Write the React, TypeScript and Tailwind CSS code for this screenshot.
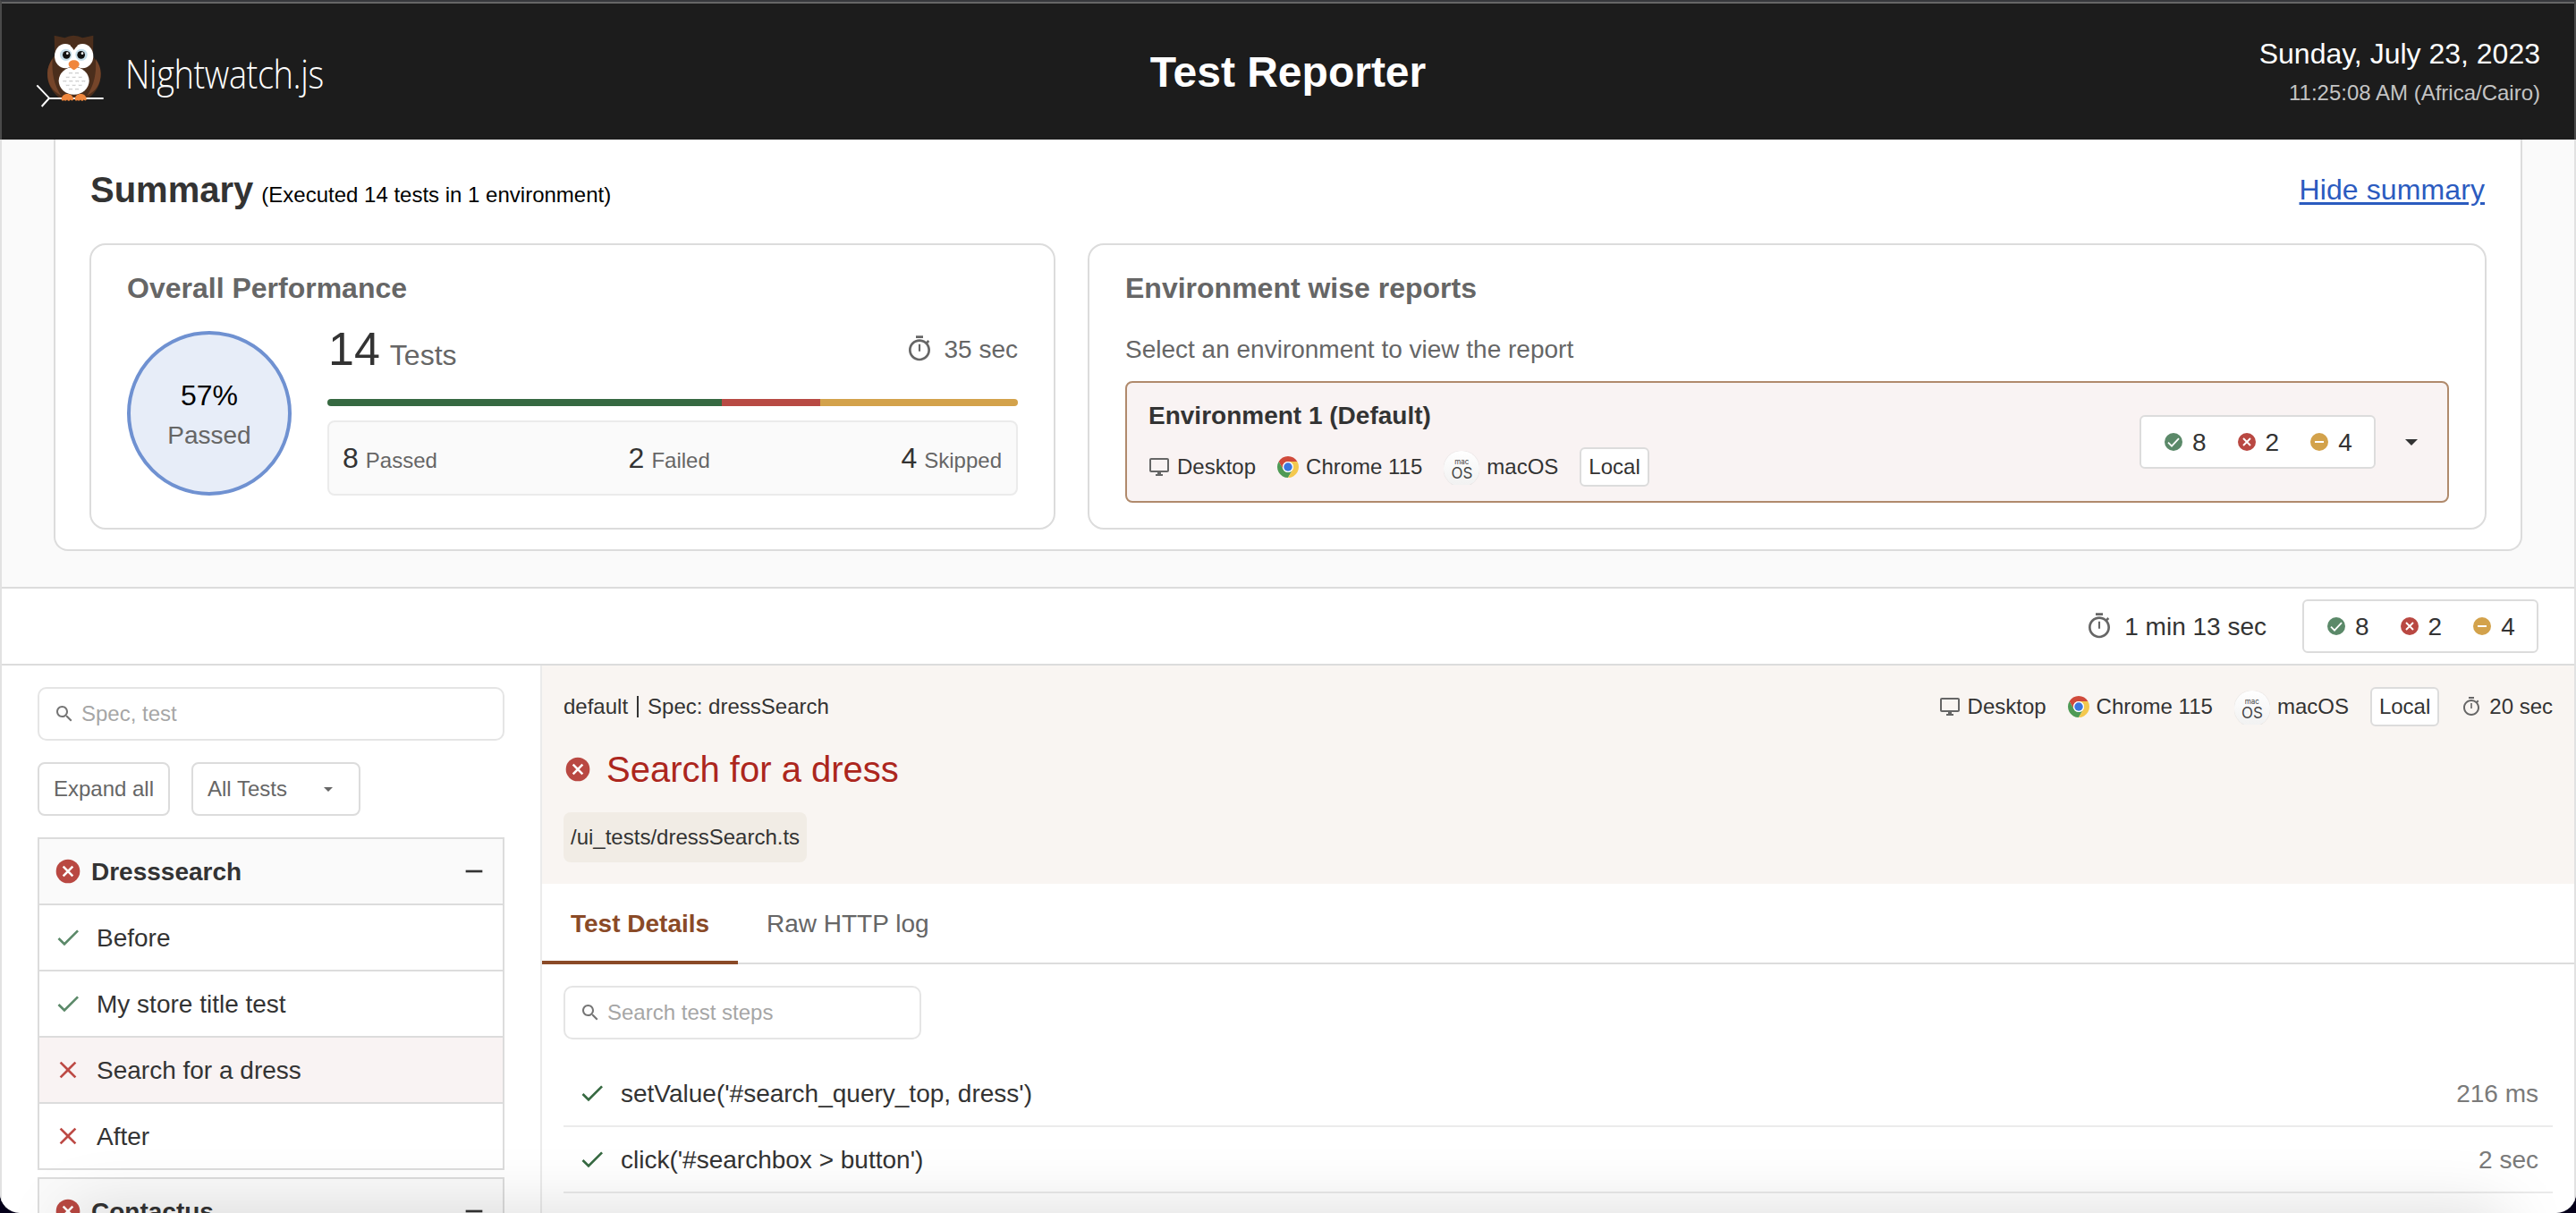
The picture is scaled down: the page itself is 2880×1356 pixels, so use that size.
import React from "react";

type IconProps = { className?: string };

const Glyph = ({ d, className }: { d: string; className?: string }) => (
  <svg viewBox="0 0 24 24" fill="currentColor" className={"shrink-0 " + (className ?? "")}>
    <path d={d} />
  </svg>
);

const Timer = ({ className }: IconProps) => (
  <Glyph
    className={className}
    d="M15 1H9v2h6V1zm-3.8 13h1.6V8h-1.6v6zm7.83-6.61l1.42-1.42c-.43-.51-.9-.99-1.41-1.41l-1.42 1.42C16.07 4.74 14.12 4 12 4c-4.97 0-9 4.03-9 9s4.02 9 9 9 9-4.03 9-9c0-2.12-.74-4.07-1.97-5.61zM12 20c-3.87 0-7-3.13-7-7s3.13-7 7-7 7 3.13 7 7-3.13 7-7 7z"
  />
);

const Search = ({ className }: IconProps) => (
  <Glyph
    className={className}
    d="M15.5 14h-.79l-.28-.27C15.41 12.59 16 11.11 16 9.5 16 5.91 13.09 3 9.5 3S3 5.91 3 9.5 5.91 16 9.5 16c1.61 0 3.09-.59 4.23-1.57l.27.28v.79l5 4.99L20.49 19l-4.99-5zm-6 0C7.01 14 5 11.99 5 9.5S7.01 5 9.5 5 14 7.01 14 9.5 11.99 14 9.5 14z"
  />
);

const Check = ({ className }: IconProps) => (
  <Glyph className={className} d="M9 16.17L4.83 12l-1.42 1.41L9 19 21 7l-1.41-1.41z" />
);

const Cross = ({ className }: IconProps) => (
  <Glyph
    className={className}
    d="M19 6.41L17.59 5 12 10.59 6.41 5 5 6.41 10.59 12 5 17.59 6.41 19 12 13.41 17.59 19 19 17.59 13.41 12z"
  />
);

const Minus = ({ className }: IconProps) => <Glyph className={className} d="M19 13H5v-2h14z" />;

const Caret = ({ className }: IconProps) => (
  <svg viewBox="0 0 10 5" fill="currentColor" className={"shrink-0 " + (className ?? "")}>
    <path d="M0 0l5 5 5-5z" />
  </svg>
);

const Monitor = () => (
  <svg viewBox="0 0 24 24" fill="currentColor" className="size-6 shrink-0 text-[#666]">
    <path d="M21 2H3c-1.1 0-2 .9-2 2v12c0 1.1.9 2 2 2h7v2H8v2h8v-2h-2v-2h7c1.1 0 2-.9 2-2V4c0-1.100-.9-2-2-2zm0 14H3V4h18v12z" />
  </svg>
);

const Chrome = () => (
  <svg viewBox="0 0 48 48" className="size-6 shrink-0">
    <path d="M24 12h20.780A24 24 0 0 0 3.220 12l10.390 18A12 12 0 0 1 24 12z" fill="#d04a3b" />
    <path d="M3.220 12A24 24 0 0 0 24 48l10.390-18A12 12 0 0 1 13.610 30z" fill="#4f9a55" />
    <path d="M44.780 12H24a12 12 0 0 1 10.390 18L24 48A24 24 0 0 0 44.780 12z" fill="#f4c84e" />
    <circle cx="24" cy="24" r="12" fill="#fff" />
    <circle cx="24" cy="24" r="9.500" fill="#3b76e0" />
  </svg>
);

const MacBadge = () => (
  <span className="mt-0.5 flex h-[38px] w-10 shrink-0 items-start overflow-hidden">
    <span className="flex size-10 shrink-0 flex-col items-center rounded-full bg-linear-to-b from-white to-[#f1f1f1] pt-[7px] font-[Inter] text-[#444] shadow-[0_0_1px_#bbb]">
      <span className="text-[8px] leading-[10px]">mac</span>
      <span className="text-[17px] leading-[16px]">OS</span>
    </span>
  </span>
);

const StatusDot = ({ kind, className }: { kind: "pass" | "fail" | "skip"; className?: string }) => {
  const fill = { pass: "#5b8969", fail: "#b94842", skip: "#d3a24b" }[kind];
  return (
    <svg viewBox="0 0 24 24" className={"shrink-0 " + (className ?? "")}>
      <circle cx="12" cy="12" r="10" fill={fill} />
      {kind === "pass" && <path d="M6 12.700l4 4 8-8.500" fill="none" stroke="#fff" strokeWidth="1.800" />}
      {kind === "fail" && <path d="M8 8l8 8M16 8l-8 8" fill="none" stroke="#fff" strokeWidth="1.900" />}
      {kind === "skip" && <path d="M7 12h10" fill="none" stroke="#fff" strokeWidth="2" />}
    </svg>
  );
};

const Owl = () => (
  <svg viewBox="0 0 300 300" className="size-[100px] shrink-0">
    <path d="M92 29l35 8q30-16 60 0l36-8-1 70q26 34 26 60 0 48-40 79l-99 0Q69 206 69 159q0-36 25-64z" fill="#4b2e1c" />
    <path d="M86 108Q69 132 69 156q0 52 46 74-34-48-29-122zM231 108q17 24 17 48 0 52-46 74 34-48 29-122z" fill="#75452a" />
    <ellipse cx="158" cy="181" rx="51" ry="46" fill="#fff" />
    <ellipse cx="129" cy="98" rx="36" ry="41" fill="#fff" />
    <ellipse cx="187" cy="98" rx="36" ry="41" fill="#fff" />
    <path d="M136 84h44v32q-2 18-22 28-20-10-22-28z" fill="#fff" />
    <path d="M146 64q8 6 12 14 4-8 12-14l-12-8z" fill="#4b2e1c" />
    <circle cx="131" cy="94" r="20" fill="#c6deea" />
    <circle cx="183" cy="94" r="20" fill="#c6deea" />
    <circle cx="133" cy="94" r="13" fill="#111" />
    <circle cx="182" cy="94" r="13" fill="#111" />
    <circle cx="136" cy="89" r="4" fill="#fff" />
    <circle cx="186" cy="89" r="4" fill="#fff" />
    <path d="M158 112c10 0 18 6 18 13 0 9-10 14-18 20-8-6-18-11-18-20 0-7 8-13 18-13z" fill="#f0863c" />
    <g fill="#cfcfcf">
      {[
        [147, 153], [168, 153],
        [137, 167], [158, 167], [179, 167],
        [127, 180], [148, 180], [169, 180], [190, 180],
        [137, 194], [158, 194], [179, 194],
        [147, 207], [168, 207],
      ].map(([x, y]) => (
        <path key={x + "-" + y} d={`M${x - 7} ${y}h14l-3 5-4-2-4 2z`} />
      ))}
    </g>
    <path d="M34 196l41 43-25 28M75 240h182" fill="none" stroke="#fff" strokeWidth="6" />
    <path d="M116 243c0-10 8-18 20-18s20 8 20 18c0 6-8 5-10 1-3 6-8 6-11 0-3 6-8 5-9 1-3 4-10 4-10-2zM161 243c0-10 8-18 20-18s19 8 19 18c0 6-7 5-9 1-3 6-8 6-11 0-3 6-8 5-9 1-3 4-10 4-10-2z" fill="#f0863c" />
  </svg>
);

const Counts = () => (
  <div className="flex h-[60px] w-[264px] items-center gap-[33px] rounded-[6px] border-2 border-[#dcdcdc] bg-white pl-6 text-[28px] text-[#333]">
    <div className="flex items-center gap-[9px]">
      <StatusDot kind="pass" className="size-6" />
      <span className="pt-0.5">8</span>
    </div>
    <div className="flex items-center gap-[9px]">
      <StatusDot kind="fail" className="size-6" />
      <span className="pt-0.5">2</span>
    </div>
    <div className="flex items-center gap-[9px]">
      <StatusDot kind="skip" className="size-6" />
      <span className="pt-0.5">4</span>
    </div>
  </div>
);

const EnvInfo = () => (
  <div className="flex h-11 items-center gap-6 text-2xl text-[#333]">
    <div className="flex items-center gap-2">
      <Monitor />
      Desktop
    </div>
    <div className="flex items-center gap-2">
      <Chrome />
      <span>Chrome 115</span>
    </div>
    <div className="flex items-center gap-2">
      <MacBadge />
      macOS
    </div>
    <div className="flex h-11 items-center rounded-[6px] border-2 border-[#dcdcdc] bg-white px-2">Local</div>
  </div>
);

const SpecHeader = ({ name }: { name: string }) => (
  <div className="box-content flex h-[72px] items-center bg-[#fafafa] px-4 text-[28px] font-bold text-[#333]">
    <StatusDot kind="fail" className="mr-2.5 size-8" />
    <span className="pt-0.5">{name}</span>
    <Minus className="ml-auto size-8" />
  </div>
);

const tests = [
  { name: "Before", ok: true, active: false },
  { name: "My store title test", ok: true, active: false },
  { name: "Search for a dress", ok: false, active: true },
  { name: "After", ok: false, active: false },
];

const steps = [
  { cmd: "setValue('#search_query_top, dress')", time: "216 ms" },
  { cmd: "click('#searchbox > button')", time: "2 sec" },
];

const Stat = ({ n, label }: { n: string; label: string }) => (
  <div className="flex items-baseline gap-2">
    <span className="text-[32px] leading-10 text-[#333]">{n}</span>
    <span className="text-2xl leading-8 text-[#666]">{label}</span>
  </div>
);

export default function App() {
  return (
    <div className="relative h-[1356px] w-[2880px] overflow-hidden bg-[#05001a] font-['Liberation_Sans',Arial,sans-serif] leading-none">
      <div className="relative flex h-full flex-col overflow-hidden rounded-b-[22px] bg-white">
        <header className="grid h-[156px] shrink-0 grid-cols-3 items-center border-x-2 border-t-2 border-x-[#4a4a4a] border-t-[#37383c] bg-[#1c1c1c] pt-0.5 shadow-[inset_0_2px_0_#666]">
          <div className="flex items-center pl-7">
            <Owl />
            <span className="ml-[10px] origin-left scale-x-[0.845] pt-0.5 font-['Open_Sans'] text-[45px] leading-none font-light tracking-[-0.5px] text-white">
              Nightwatch.js
            </span>
          </div>
          <h1 className="pt-px text-center text-[48px] font-bold text-white">Test Reporter</h1>
          <div className="flex flex-col items-end pt-1 pr-[38px]">
            <span className="text-[32px] leading-[44px] text-white">Sunday, July 23, 2023</span>
            <span className="text-2xl leading-[44px] text-[#c4c4c4]">11:25:08 AM (Africa/Cairo)</span>
          </div>
        </header>

        <div className="flex grow flex-col border-x-2 border-[#e2e2e2]">
          <section className="h-[502px] shrink-0 border-b-2 border-[#dcdcdc] bg-[#fafafa] px-[58px]">
            <div className="h-[460px] rounded-b-2xl border-2 border-t-0 border-[#dcdcdc] bg-white px-[38px] pt-8">
              <div className="flex h-12 items-center justify-between">
                <div className="flex h-12 items-baseline gap-[9px] pl-px">
                  <span className="text-[40px] leading-[48px] font-bold text-[#333]">Summary</span>
                  <span className="text-2xl leading-none text-black">(Executed 14 tests in 1 environment)</span>
                </div>
                <a className="pr-0.5 text-[32px] tracking-[0.1px] text-[#2b5bbf]">
                  <span className="underline decoration-[3px] underline-offset-[3px]">Hide summary</span>
                </a>
              </div>

              <div className="mt-9 grid grid-cols-[1080px_1564px] gap-9">
                <div className="h-80 rounded-[18px] border-2 border-[#dcdcdc] px-10 pt-7">
                  <h2 className="text-[32px] leading-10 font-bold text-[#666]">Overall Performance</h2>
                  <div className="mt-7 flex gap-10">
                    <div className="flex size-[184px] shrink-0 flex-col items-center justify-center rounded-full border-4 border-[#6f91d1] bg-[#e7edf8] pt-1.5">
                      <span className="text-[32px] leading-[44px] text-black">57%</span>
                      <span className="text-[28px] leading-[46px] text-[#666]">Passed</span>
                    </div>
                    <div className="flex grow flex-col">
                      <div className="flex h-10 items-center justify-between">
                        <div className="flex h-10 items-baseline gap-[11px] pl-px">
                          <span className="text-[52px] leading-10 text-[#333]">14</span>
                          <span className="text-[32px] leading-none text-[#666]">Tests</span>
                        </div>
                        <div className="flex items-center gap-3 text-[28px] text-[#666]">
                          <Timer className="size-8" />
                          <span className="pt-0.5">35 sec</span>
                        </div>
                      </div>
                      <div className="mt-9 flex h-2 overflow-hidden rounded-full">
                        <div className="grow-[8] bg-[#366941]" />
                        <div className="grow-[2] bg-[#b84a44]" />
                        <div className="grow-[4] bg-[#d3a24b]" />
                      </div>
                      <div className="mt-4 flex h-[84px] items-center justify-between rounded-lg border-2 border-[#ebebeb] bg-[#fafafa] pr-4 pl-[15px]">
                        <Stat n="8" label="Passed" />
                        <Stat n="2" label="Failed" />
                        <Stat n="4" label="Skipped" />
                      </div>
                    </div>
                  </div>
                </div>

                <div className="h-80 rounded-[18px] border-2 border-[#dcdcdc] px-10 pt-7">
                  <h2 className="text-[32px] leading-10 font-bold text-[#666]">Environment wise reports</h2>
                  <p className="mt-7 pt-px text-[28px] leading-10 text-[#666]">Select an environment to view the report</p>
                  <div className="mt-[15px] flex h-[136px] items-center rounded-lg border-2 border-[#b08a6c] bg-[#f9f3f3] pr-[33px] pl-6">
                    <div className="flex flex-col gap-4 pt-0.5">
                      <h3 className="text-[28px] leading-[38px] font-bold text-[#333]">Environment 1 (Default)</h3>
                      <EnvInfo />
                    </div>
                    <div className="ml-auto flex items-center gap-[33px]">
                      <Counts />
                      <Caret className="h-[7px] w-[14px] text-[#333]" />
                    </div>
                  </div>
                </div>
              </div>
            </div>
          </section>

          <section className="flex h-[86px] shrink-0 items-center justify-end gap-10 border-b-2 border-[#dcdcdc] pr-10">
            <div className="flex items-center gap-3 text-[28px] text-[#333]">
              <Timer className="size-8 text-[#666]" />
              <span className="pt-0.5">1 min 13 sec</span>
            </div>
            <Counts />
          </section>

          <main className="flex h-[612px] shrink-0 overflow-hidden">
            <aside className="flex w-[604px] shrink-0 flex-col border-r-2 border-[#ebebeb] px-10 pt-6">
              <div className="flex h-[60px] shrink-0 items-center gap-[7px] rounded-[10px] border-2 border-[#e5e5e5] px-4 text-2xl text-[#a6a6a6]">
                <Search className="size-6 text-[#757575]" />
                Spec, test
              </div>
              <div className="mt-6 flex gap-6 text-2xl text-[#666]">
                <button className="flex h-[60px] w-[148px] items-center justify-center rounded-lg border-2 border-[#dcdcdc]">Expand all</button>
                <button className="flex h-[60px] w-[189px] items-center justify-between rounded-lg border-2 border-[#dcdcdc] pr-[29px] pl-4">
                  All Tests
                  <Caret className="h-[5px] w-[10px]" />
                </button>
              </div>
              <div className="mt-6 flex shrink-0 flex-col divide-y-2 divide-[#dcdcdc] border-2 border-[#dcdcdc]">
                <SpecHeader name="Dresssearch" />
                {tests.map((t) => (
                  <div
                    key={t.name}
                    className={
                      "box-content flex h-[72px] items-center gap-4 px-4 text-[28px] text-[#333] " +
                      (t.active ? "bg-[#f9f3f3]" : "bg-white")
                    }
                  >
                    {t.ok ? <Check className="size-8 text-[#5b8969]" /> : <Cross className="size-8 text-[#bd4a45]" />}
                    <span className="pt-0.5">{t.name}</span>
                  </div>
                ))}
              </div>
              <div className="mt-2 shrink-0 border-2 border-[#dcdcdc]">
                <SpecHeader name="Contactus" />
              </div>
            </aside>

            <article className="flex grow flex-col">
              <div className="h-[244px] shrink-0 bg-[#f9f5f2] px-6 pt-6">
                <div className="flex h-11 items-center justify-between text-2xl text-[#333]">
                  <div className="flex items-center gap-[10px]">
                    default
                    <span className="h-6 w-[2px] bg-[#333]" />
                    Spec: dressSearch
                  </div>
                  <div className="flex items-center gap-6">
                    <EnvInfo />
                    <div className="flex items-center gap-2">
                      <Timer className="size-6 text-[#666]" />
                      20 sec
                    </div>
                  </div>
                </div>
                <h2 className="mt-6 flex h-12 items-center gap-4 text-[40px] text-[#ac261d]">
                  <StatusDot kind="fail" className="size-8" />
                  Search for a dress
                </h2>
                <div className="mt-6 flex h-14 w-[272px] items-center rounded-lg bg-[#f1ece5] px-2 text-2xl text-[#333]">
                  /ui_tests/dressSearch.ts
                </div>
              </div>
              <nav className="flex h-[90px] shrink-0 text-[28px] leading-[90px] shadow-[inset_0_-2px_0_#dcdcdc]">
                <div className="w-[219px] border-b-4 border-[#8a4a27] pl-8 font-bold text-[#8a4a27]">Test Details</div>
                <div className="px-8 text-[#666]">Raw HTTP log</div>
              </nav>
              <div className="flex flex-col px-6 pt-6">
                <div className="flex h-[60px] w-[400px] items-center gap-[7px] rounded-[10px] border-2 border-[#e5e5e5] px-4 text-2xl text-[#a6a6a6]">
                  <Search className="size-6 text-[#757575]" />
                  Search test steps
                </div>
                <div className="mt-6">
                  {steps.map((s) => (
                    <div key={s.cmd} className="flex h-[74px] items-center border-b-2 border-[#ebebeb] px-4 text-[28px] text-[#333]">
                      <Check className="mr-4 size-8 text-[#366941]" />
                      <span className="pt-0.5">{s.cmd}</span>
                      <span className="ml-auto pt-0.5 text-[#7a7a7a]">{s.time}</span>
                    </div>
                  ))}
                </div>
              </div>
            </article>
          </main>
        </div>

        <div className="pointer-events-none absolute inset-x-20 top-full h-20 shadow-[0_0_76px_rgba(0,0,0,0.15)]" />
      </div>
    </div>
  );
}
